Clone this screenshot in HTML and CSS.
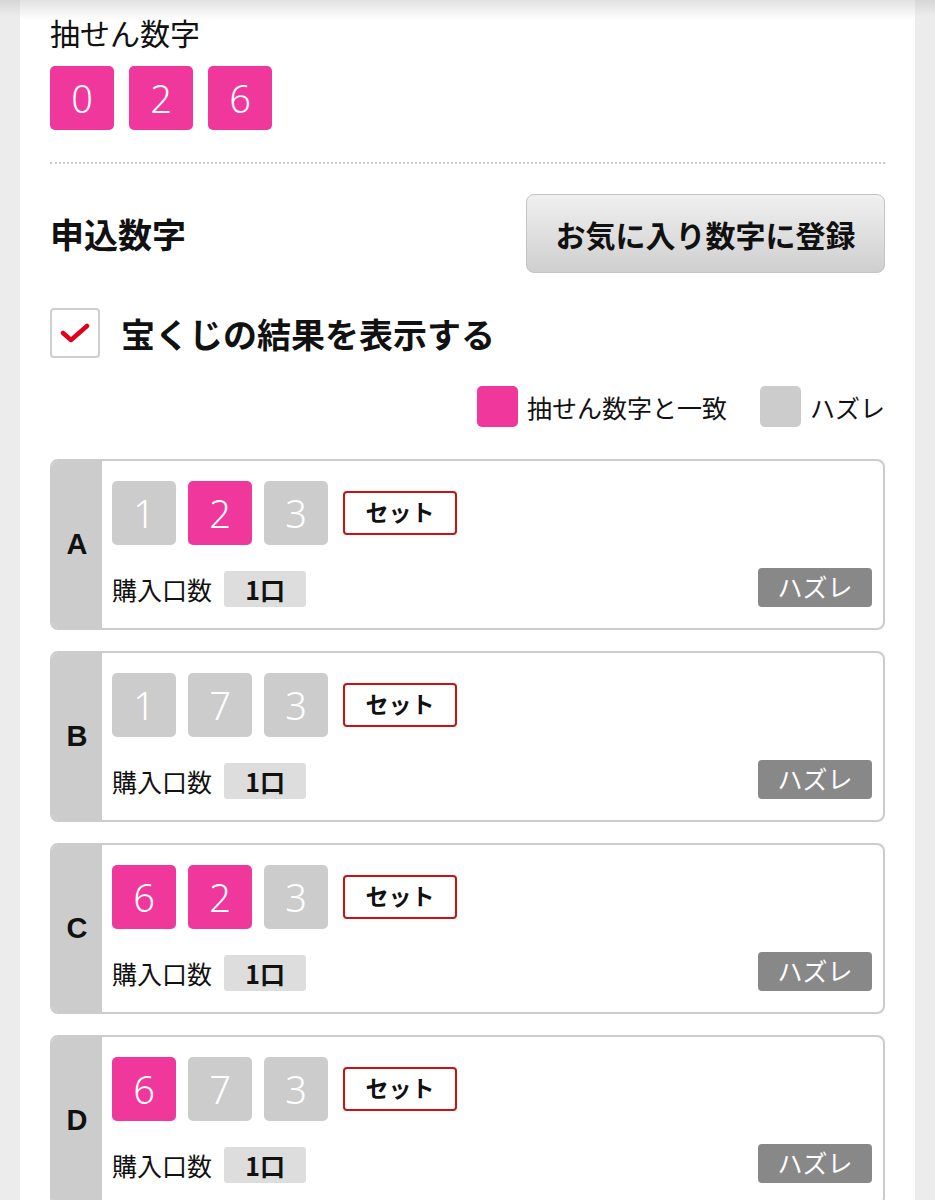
FILE: index.html
```html
<!DOCTYPE html>
<html lang="ja">

<head>
    <meta charset="UTF-8">
    <meta name="viewport" content="width=device-width, initial-scale=1.0">
    <title>抽せん結果</title>
    <link rel="stylesheet" href="styles.css">
</head>

<body>
    <div class="panel">
        <h3 class="draw-title">抽せん数字</h3>
        <div class="draw-nums">
            <span class="num hit">0</span>
            <span class="num hit">2</span>
            <span class="num hit">6</span>
        </div>

        <hr class="dots">

        <div class="section-head">
            <h2>申込数字</h2>
            <button class="fav-btn">お気に入り数字に登録</button>
        </div>

        <label class="check-row">
            <span class="check-box">
                <svg width="30" height="22" viewBox="0 0 30 22">
                    <path d="M3 11 L11 18 L27 4" fill="none" stroke="#e0001b" stroke-width="4.5" stroke-linecap="round" stroke-linejoin="round"/>
                </svg>
            </span>
            宝くじの結果を表示する
        </label>

        <div class="legend">
            <span class="legend-sw hit"></span>抽せん数字と一致
            <span class="legend-sw miss"></span>ハズレ
        </div>

        <div class="entry">
            <div class="entry-label">A</div>
            <div class="entry-body">
                <div class="entry-nums">
                    <span class="num miss">1</span>
                    <span class="num hit">2</span>
                    <span class="num miss">3</span>
                    <span class="set-tag">セット</span>
                </div>
                <div class="entry-foot">
                    <div class="qty">購入口数<span class="qty-val">1口</span></div>
                    <span class="result">ハズレ</span>
                </div>
            </div>
        </div>

        <div class="entry">
            <div class="entry-label">B</div>
            <div class="entry-body">
                <div class="entry-nums">
                    <span class="num miss">1</span>
                    <span class="num miss">7</span>
                    <span class="num miss">3</span>
                    <span class="set-tag">セット</span>
                </div>
                <div class="entry-foot">
                    <div class="qty">購入口数<span class="qty-val">1口</span></div>
                    <span class="result">ハズレ</span>
                </div>
            </div>
        </div>

        <div class="entry">
            <div class="entry-label">C</div>
            <div class="entry-body">
                <div class="entry-nums">
                    <span class="num hit">6</span>
                    <span class="num hit">2</span>
                    <span class="num miss">3</span>
                    <span class="set-tag">セット</span>
                </div>
                <div class="entry-foot">
                    <div class="qty">購入口数<span class="qty-val">1口</span></div>
                    <span class="result">ハズレ</span>
                </div>
            </div>
        </div>

        <div class="entry">
            <div class="entry-label">D</div>
            <div class="entry-body">
                <div class="entry-nums">
                    <span class="num hit">6</span>
                    <span class="num miss">7</span>
                    <span class="num miss">3</span>
                    <span class="set-tag">セット</span>
                </div>
                <div class="entry-foot">
                    <div class="qty">購入口数<span class="qty-val">1口</span></div>
                    <span class="result">ハズレ</span>
                </div>
            </div>
        </div>
    </div>
</body>

</html>
```

FILE: styles.css
```css
body {
    margin: 0;
    font-family: "Noto Sans CJK JP", "Noto Sans", sans-serif;
    color: #111;
    background: linear-gradient(to bottom, #d6d6d6 0, #ececec 16px) #ececec;
}

.panel {
    margin: 0 20px;
    padding: 11px 30px 40px;
    background: linear-gradient(to bottom, #e2e2e2 0, #ffffff 20px) #fff;
}

.draw-title {
    margin: 0;
    font-size: 30px;
    font-weight: 400;
    line-height: 42px;
}

.draw-nums {
    display: flex;
    gap: 15px;
    margin-top: 13px;
}

.num {
    width: 64px;
    height: 64px;
    border-radius: 5px;
    display: flex;
    align-items: center;
    justify-content: center;
    color: #fff;
    font-family: "Noto Sans", sans-serif;
    font-weight: 300;
    font-size: 38px;
}

.num.hit {
    background: #f0379c;
}

.num.miss {
    background: #cccccc;
}

.dots {
    border: none;
    border-top: 2px dotted #c8c8c8;
    margin: 32px 0 0;
}

.section-head {
    display: flex;
    justify-content: space-between;
    align-items: center;
    margin-top: 30px;
}

.section-head h2 {
    margin: 0;
    font-size: 34px;
    font-weight: 700;
}

.fav-btn {
    width: 359px;
    height: 79px;
    font-family: inherit;
    font-size: 30px;
    font-weight: 700;
    color: #111;
    border: 1px solid #c4c4c4;
    border-radius: 8px;
    background: linear-gradient(to bottom, #f0f0f0, #cfcfcf);
}

.check-row {
    display: flex;
    align-items: center;
    gap: 21px;
    margin-top: 35px;
    font-size: 34px;
    font-weight: 700;
}

.check-box {
    width: 46px;
    height: 46px;
    border: 2px solid #cfcfcf;
    border-radius: 4px;
    display: flex;
    align-items: center;
    justify-content: center;
    background: #fff;
}

.legend {
    display: flex;
    justify-content: flex-end;
    align-items: center;
    margin-top: 28px;
    font-size: 25px;
}

.legend-sw {
    width: 41px;
    height: 41px;
    border-radius: 5px;
    margin-right: 9px;
}

.legend-sw.hit {
    background: #f0379c;
}

.legend-sw.miss {
    background: #cccccc;
    margin-left: 33px;
}

.entry {
    display: flex;
    border: 2px solid #cccccc;
    border-radius: 8px;
    overflow: hidden;
    margin-top: 21px;
}

.legend + .entry {
    margin-top: 32px;
}

.entry-label {
    width: 50px;
    background: #cccccc;
    display: flex;
    align-items: center;
    justify-content: center;
    font-family: "Liberation Sans", Arial, sans-serif;
    font-size: 29px;
    font-weight: 700;
}

.entry-body {
    flex: 1;
    padding: 20px 11px 21px 10px;
}

.entry-nums {
    display: flex;
    align-items: center;
    gap: 12px;
}

.set-tag {
    margin-left: 3px;
    width: 110px;
    height: 36px;
    border: 2px solid #cc1111;
    border-radius: 4px;
    display: flex;
    align-items: center;
    justify-content: center;
    font-size: 23px;
    font-weight: 700;
    padding-bottom: 4px;
}

.entry-foot {
    display: flex;
    justify-content: space-between;
    align-items: flex-end;
    margin-top: 23px;
}

.qty {
    display: flex;
    align-items: center;
    font-size: 25px;
}

.qty-val {
    margin-left: 12px;
    width: 82px;
    height: 36px;
    background: #dddddd;
    border-radius: 3px;
    display: flex;
    align-items: center;
    justify-content: center;
    font-weight: 700;
    font-size: 25px;
}

.result {
    width: 114px;
    height: 39px;
    background: #888888;
    color: #fff;
    border-radius: 4px;
    display: flex;
    align-items: center;
    justify-content: center;
    font-size: 25px;
    padding-bottom: 3px;
    box-sizing: border-box;
}
```
